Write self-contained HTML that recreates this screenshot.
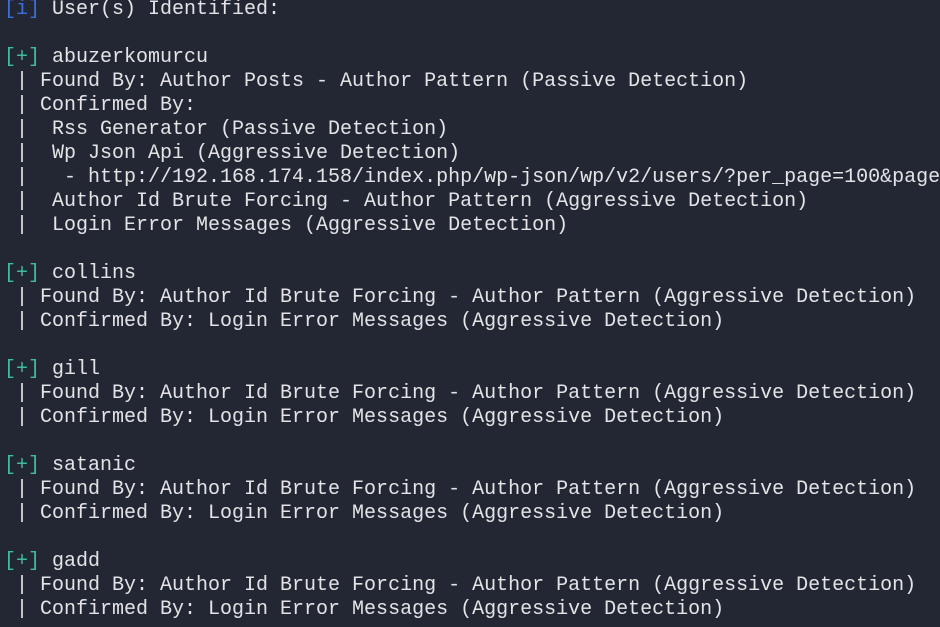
<!DOCTYPE html>
<html><head><meta charset="utf-8"><style>
html,body{margin:0;padding:0;background:#232734;width:940px;height:627px;overflow:hidden}
pre{margin:0;position:absolute;left:4px;top:-2px;font-family:"Liberation Mono",monospace;font-size:20px;line-height:24px;color:#e4e4e6;white-space:pre}
.b{color:#3b6fe0}.g{color:#3cbf9e}
</style></head><body><pre><span class="b">[i]</span> User(s) Identified:

<span class="g">[+]</span> abuzerkomurcu
 | Found By: Author Posts - Author Pattern (Passive Detection)
 | Confirmed By:
 |  Rss Generator (Passive Detection)
 |  Wp Json Api (Aggressive Detection)
 |   - http://192.168.174.158/index.php/wp-json/wp/v2/users/?per_page=100&amp;page=1
 |  Author Id Brute Forcing - Author Pattern (Aggressive Detection)
 |  Login Error Messages (Aggressive Detection)

<span class="g">[+]</span> collins
 | Found By: Author Id Brute Forcing - Author Pattern (Aggressive Detection)
 | Confirmed By: Login Error Messages (Aggressive Detection)

<span class="g">[+]</span> gill
 | Found By: Author Id Brute Forcing - Author Pattern (Aggressive Detection)
 | Confirmed By: Login Error Messages (Aggressive Detection)

<span class="g">[+]</span> satanic
 | Found By: Author Id Brute Forcing - Author Pattern (Aggressive Detection)
 | Confirmed By: Login Error Messages (Aggressive Detection)

<span class="g">[+]</span> gadd
 | Found By: Author Id Brute Forcing - Author Pattern (Aggressive Detection)
 | Confirmed By: Login Error Messages (Aggressive Detection)
</pre></body></html>
